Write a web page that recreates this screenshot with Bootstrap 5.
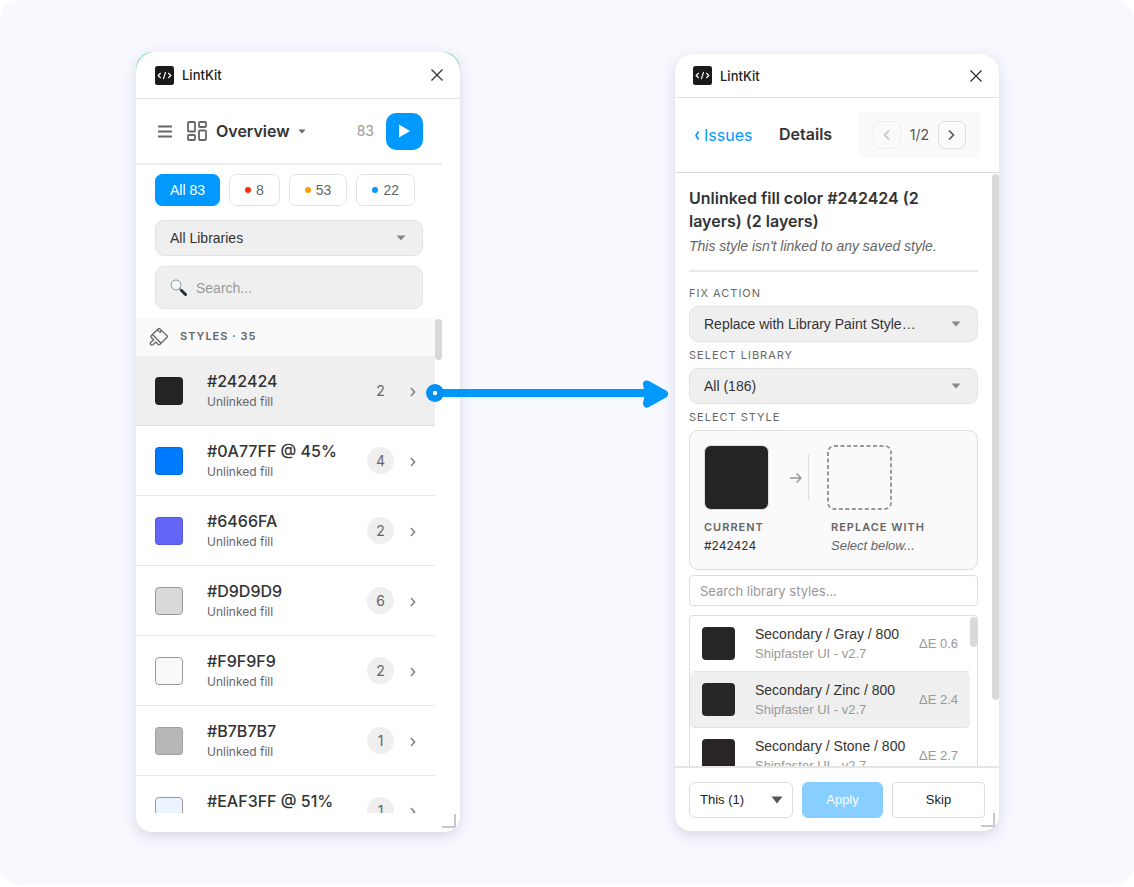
<!DOCTYPE html>
<html lang="en">
<head>
<meta charset="utf-8">
<meta name="viewport" content="width=device-width, initial-scale=1">
<title>LintKit</title>
<link rel="stylesheet" href="https://cdn.jsdelivr.net/npm/bootstrap@5.3.0/dist/css/bootstrap.min.css">
<style>
  :root { --accent: #0099ff; --line: #e2e2e2; --ink: #333; --soft: #efefef; --arial: "Liberation Sans", Arial, sans-serif; }
  body { font-family: Inter, "Liberation Sans", sans-serif; color: var(--ink); background: #fff; font-size: 14px; line-height: 20px; }
  .stage { background: #f8f9ff; border-radius: 20px; height: calc(100vh - 2px); min-height: 600px; padding: 52px 16px 53px 17px; }
  .panel-wrap { flex: 0 1 324px; min-width: 0; isolation: isolate; }
  .overview-wrap::before { content: ""; position: absolute; z-index: -1; inset: 0 0 auto; height: 40px; border-radius: 17px 17px 0 0; background: #6fdcc0; }
  .panel { height: 100%; background: #fff; border-radius: 19px 19px 16px 16px; overflow: hidden; box-shadow: 0 4px 14px rgba(40,40,80,.16); }
  .details-wrap { padding: 2px 0 1px; }
  .connector { flex: 0 1 215px; }
  .connector svg { position: absolute; left: -34px; top: 325px; width: calc(100% + 28px); z-index: 3; overflow: visible; }
  .titlebar { height: 47px; padding: 0 16px 0 19px; border-bottom: 1px solid var(--line); flex: none; font-size: 13px; font-weight: 500; color: #222; }
  .details-wrap .titlebar { height: 44px; padding-left: 18px; }
  .plain { background: none; border: 0; padding: 0; display: flex; align-items: center; color: inherit; }
  .toolbar { height: 66px; margin-right: 18px; padding: 0 19px 0 21px; border-bottom: 2px solid #ececec; flex: none; }
  .view-name { font-size: 16px; font-weight: 600; margin-left: 14px; }
  .total { color: #999; margin-right: 12px; }
  .play { width: 37px; height: 37px; border-radius: 10px; background: var(--accent); justify-content: center; }
  .filters { padding: 9px 37px 9px 19px; flex: none; }
  .chips { gap: 9px; margin-bottom: 14px; }
  .chip { height: 32px; border: 1px solid var(--line); border-radius: 7px; background: #fff; color: #666; font: 14px/20px var(--arial); padding: 0 15px; display: flex; align-items: center; gap: 5px; }
  .chip.on { background: var(--accent); border-color: var(--accent); color: #fff; padding: 0 14px; }
  .dot { width: 6px; height: 6px; border-radius: 50%; }
  .field, .field:focus { height: 36px; border: 1px solid var(--line); border-radius: 9px; background-color: var(--soft); color: var(--ink); font: 14px/20px var(--arial); padding: 0 14px; box-shadow: none; }
  select.field { background-image: url("data:image/svg+xml,%3Csvg xmlns='http://www.w3.org/2000/svg' viewBox='0 0 10 6'%3E%3Cpath d='M.5.5h9L5 5.5z' fill='%23888'/%3E%3C/svg%3E"); background-size: 10px 6px; background-position: right 16px center; padding-right: 30px; }
  .find { height: 43px; gap: 9px; margin-top: 10px; }
  .find input { border: 0; outline: 0; background: none; padding: 0; width: 100%; min-width: 0; font: 14px/20px var(--arial); }
  ::placeholder { color: #999 !important; opacity: 1; }
  .issues { min-height: 0; flex: 1; overflow: hidden; margin: 0 18px 19px 0; padding-right: 7px; }
  .thumb { position: absolute; right: 0; top: 1px; width: 7px; border-radius: 4px; background: #d9d9d9; }
  .group-head { height: 38px; padding: 0 13px; gap: 11px; background: #fafafa; font-size: 11px; font-weight: 600; letter-spacing: 1px; color: #666; margin: 0; }
  .issue { height: 70px; border: 0; border-bottom: 1px solid #e8e8e8; padding: 0 18px 0 19px; background: #fff; color: var(--ink); text-decoration: none; display: flex; align-items: center; }
  .issue.on { background: var(--soft); border-bottom-color: #dedede; }
  .swatch { width: 28px; height: 28px; border-radius: 4px; border: 1px solid rgba(0,0,0,.12); flex: none; margin-right: 24px; }
  .swatch.edge { border-color: #999; }
  .issue strong { display: block; font-size: 16px; line-height: 22px; font-weight: 500; }
  .issue em { display: block; font-style: normal; font-size: 12px; line-height: 20px; color: #666; }
  .count { min-width: 27px; height: 27px; border-radius: 14px; background: var(--soft); color: #666; font-size: 14px; line-height: 27px; text-align: center; margin-right: 15px; }
  .grip { position: absolute; right: 4px; bottom: 4px; width: 14px; height: 14px; border: solid #c8c8c8; border-width: 0 2px 2px 0; }
  .crumbs { height: 75px; padding: 0 19px; border-bottom: 1px solid #dcdcdc; flex: none; font-size: 16px; }
  .crumbs a { color: var(--accent); text-decoration: none; }
  .crumbs h1 { font-size: 16px; font-weight: 600; margin: 0; }
  .pager { background: #fafafa; height: 46px; padding: 0 14px; gap: 9px; font-size: 14px; color: #555; }
  .pager button { width: 28px; height: 28px; border: 1px solid #ddd; border-radius: 7px; background: none; justify-content: center; color: #555; }
  .pager button:disabled { border-color: #eee; color: #bbb; }
  .detail { flex: 1; min-height: 0; overflow: hidden; padding: 14px 21px 0 14px; }
  .detail h2 { font-size: 16px; line-height: 23px; font-weight: 600; margin: 0; padding-right: 16px; }
  .note { font: italic 14px/26px var(--arial); color: #666; margin: 0; padding-bottom: 11px; border-bottom: 2px solid #e8e8e8; }
  .cap { display: block; font-size: 11px; line-height: 26px; letter-spacing: 1px; color: #666; }
  .compare { height: 140px; border: 1px solid #ddd; border-radius: 9px; background: #fafafa; padding: 14px; margin-bottom: 5px; }
  .big { width: 65px; height: 65px; border-radius: 7px; margin-bottom: 8px; }
  .big.filled { border: 1px solid #ddd; }
  .compare b { display: block; font-size: 11px; line-height: 19px; font-weight: 600; letter-spacing: 1px; color: #666; }
  .compare .value { display: block; font-size: 12px; line-height: 18px; }
  .compare .unset { font: italic 13px/18px var(--arial); color: #666; }
  .side-a { width: 75px; }
  .side-b { margin-left: 18px; white-space: nowrap; }
  .side-b b, .side-b .value { margin-left: 4px; }
  .arrow { margin: 27px 0 0 11px; flex: none; }
  .split { height: 46px; width: 1px; background: #ddd; margin: 9px 0 0 6px; }
  .lib-find, .lib-find:focus { height: 31px; border: 1px solid #ddd; border-radius: 4px; font: 13px/20px Inter, sans-serif; padding: 0 10px; box-shadow: none; }
  .options { border: 1px solid #ddd; border-radius: 4px; margin-top: 9px; padding-right: 7px; overflow: hidden; }
  .option { width: 100%; height: 56px; border: 0; border-bottom: 1px solid #e2e2e2; border-radius: 5px; background: #fff; padding: 0 12px; display: flex; align-items: center; text-align: left; font: 14px/19px var(--arial); color: var(--ink); }
  .option.on { background: var(--soft); }
  .option i { width: 33px; height: 33px; border-radius: 4px; margin-right: 20px; flex: none; }
  .option small { display: block; font-size: 13px; color: #999; }
  .option .delta { font-size: 13px; color: #999; }
  .actions { height: 65px; padding: 0 14px; border-top: 2px solid #e6e6e6; flex: none; gap: 9px; }
  .actions .ctl { height: 36px; border: 1px solid #ddd; border-radius: 6px; background-color: #fff; color: #222; font: 13px/18px var(--arial); padding: 0 10px; }
  .actions select.ctl { flex: 0 0 104px; background-image: url("data:image/svg+xml,%3Csvg xmlns='http://www.w3.org/2000/svg' viewBox='0 0 12 8'%3E%3Cpath d='M.5.5h11L6 7.5z' fill='%23555'/%3E%3C/svg%3E"); background-size: 12px 8px; background-position: right 9px center; }
  .actions .apply { flex: 0 0 81px; background: #88ceff; border-color: #88ceff; color: #fff; }
  .actions .skip { flex: 1; border-radius: 4px; }
</style>
</head>
<body>
<svg class="d-none" aria-hidden="true">
  <symbol id="logo" viewBox="0 0 19 19"><rect width="19" height="19" rx="2.500" fill="#1a1a1a"/><path d="M5.700 7 3.200 9.500l2.500 2.500M13.300 7l2.500 2.500-2.500 2.500M10.600 5.800 8.400 13.200" fill="none" stroke="#fff" stroke-width="1.200"/></symbol>
  <symbol id="close" viewBox="0 0 14 14"><path d="M1.500 1.500l11 11M12.500 1.500l-11 11" stroke="#333" stroke-width="1.300"/></symbol>
  <symbol id="next" viewBox="0 0 8 12"><path d="M2 3 5.500 7 2 11" fill="none" stroke="#888" stroke-width="1.700"/></symbol>
</svg>
<main class="stage d-flex justify-content-center">
  <section class="panel-wrap overview-wrap position-relative">
    <div class="panel d-flex flex-column position-relative">
      <header class="titlebar d-flex align-items-center">
        <svg width="19" height="19" class="me-2"><use href="#logo"/></svg><span>LintKit</span>
        <button class="plain ms-auto" aria-label="Close"><svg width="14" height="14"><use href="#close"/></svg></button>
      </header>
      <div class="toolbar d-flex align-items-center">
        <button class="plain" aria-label="Menu"><svg width="16" height="14"><path d="M1 2.500h14M1 7.500h14M1 12.500h14" stroke="#666" stroke-width="2"/></svg></button>
        <button class="plain view-name"><svg width="21" height="20" viewBox="0 0 21 20" fill="none" stroke="#666" stroke-width="1.800" class="me-2"><rect x="1" y="1" width="7" height="9.500" rx="1"/><rect x="12" y="1" width="7" height="5" rx="1"/><rect x="1" y="14" width="7" height="5" rx="1"/><rect x="12" y="9.500" width="7" height="9.500" rx="1"/></svg>Overview<svg width="8" height="5" class="ms-2"><path d="M.5.5h7L4 4.500z" fill="#666"/></svg></button>
        <span class="ms-auto total">83</span>
        <button class="plain play" aria-label="Run"><svg width="13" height="14"><path d="M1 .5 12 7 1 13.500z" fill="#fff"/></svg></button>
      </div>
      <div class="filters">
        <div class="d-flex chips">
          <button class="chip on">All 83</button>
          <button class="chip"><span class="dot" style="background:#ff2d0a"></span>8</button>
          <button class="chip"><span class="dot" style="background:#ffa000"></span>53</button>
          <button class="chip"><span class="dot" style="background:#0099ff"></span>22</button>
        </div>
        <select class="form-select field" aria-label="Library"><option>All Libraries</option></select>
        <label class="field find d-flex align-items-center"><svg width="17" height="17" viewBox="0 0 17 17" class="flex-shrink-0"><circle cx="6" cy="6" r="5" fill="#f2f7f8" stroke="#8798a5"/><path d="M9.500 9.500l2 2" stroke="#777" stroke-width="1.500"/><path d="M11.500 11.500l4 4" stroke="#222e38" stroke-width="3" stroke-linecap="round"/></svg><input type="search" aria-label="Search" placeholder="Search..."></label>
      </div>
      <div class="issues position-relative">
        <span class="thumb" style="height:41px"></span>
        <h2 class="group-head d-flex align-items-center"><svg width="20" height="20" viewBox="0 0 20 20" fill="none" stroke="#666" stroke-width="1.300" stroke-linejoin="round"><path d="M3.500 7.500 9.300 1.700Q10 1 10.700 1.700L18 8.700Q18.700 9.500 18 10.200L12 16.200zM3.500 7.500 2.300 8.700Q1.500 9.600 2.300 10.500L4.600 12.800 1.700 15.500Q.8 16.500 1.700 17.500T4 17.700L6.800 15 9 17.200Q10 18 11 17.200L12 16.200M8.500 3l1.700 1.700M12.300 3.600 10.600 6"/></svg>STYLES · 35</h2>
        <a href="#" class="issue on"><span class="swatch" style="background:#242424"></span><span><strong>#242424</strong><em>Unlinked fill</em></span><span class="count ms-auto">2</span><svg width="8" height="12"><use href="#next"/></svg></a>
        <a href="#" class="issue"><span class="swatch" style="background:#007aff"></span><span><strong>#0A77FF @ 45%</strong><em>Unlinked fill</em></span><span class="count ms-auto">4</span><svg width="8" height="12"><use href="#next"/></svg></a>
        <a href="#" class="issue"><span class="swatch" style="background:#6466fa"></span><span><strong>#6466FA</strong><em>Unlinked fill</em></span><span class="count ms-auto">2</span><svg width="8" height="12"><use href="#next"/></svg></a>
        <a href="#" class="issue"><span class="swatch edge" style="background:#d9d9d9"></span><span><strong>#D9D9D9</strong><em>Unlinked fill</em></span><span class="count ms-auto">6</span><svg width="8" height="12"><use href="#next"/></svg></a>
        <a href="#" class="issue"><span class="swatch edge" style="background:#f9f9f9"></span><span><strong>#F9F9F9</strong><em>Unlinked fill</em></span><span class="count ms-auto">2</span><svg width="8" height="12"><use href="#next"/></svg></a>
        <a href="#" class="issue"><span class="swatch" style="background:#b7b7b7"></span><span><strong>#B7B7B7</strong><em>Unlinked fill</em></span><span class="count ms-auto">1</span><svg width="8" height="12"><use href="#next"/></svg></a>
        <a href="#" class="issue"><span class="swatch edge" style="background:#eaf3ff"></span><span><strong>#EAF3FF @ 51%</strong><em>Unlinked fill</em></span><span class="count ms-auto">1</span><svg width="8" height="12"><use href="#next"/></svg></a>
      </div>
      <span class="grip"></span>
    </div>
  </section>

  <div class="connector position-relative">
    <svg height="32" viewBox="0 0 243 32" preserveAspectRatio="none" aria-hidden="true"><path d="M9 16h218" stroke="#0099ff" stroke-width="8"/><path d="M221 7.500 238 17l-17 9.500 2-9.500z" fill="#0099ff" stroke="#0099ff" stroke-width="8" stroke-linejoin="round"/><circle cx="9" cy="16" r="9" fill="#0090f0"/><circle cx="9" cy="16" r="2.200" fill="#fff"/></svg>
  </div>

  <section class="panel-wrap details-wrap">
    <div class="panel d-flex flex-column position-relative">
      <header class="titlebar d-flex align-items-center">
        <svg width="19" height="19" class="me-2"><use href="#logo"/></svg><span>LintKit</span>
        <button class="plain ms-auto" aria-label="Close"><svg width="14" height="14"><use href="#close"/></svg></button>
      </header>
      <div class="crumbs d-flex align-items-center justify-content-between">
        <a href="#" class="d-flex align-items-center"><svg width="6" height="12" class="me-1"><path d="M4.500 2.500 2 6.500l2.500 4" fill="none" stroke="#0099ff" stroke-width="1.600"/></svg>Issues</a>
        <h1>Details</h1>
        <div class="pager d-flex align-items-center">
          <button class="plain" disabled aria-label="Previous"><svg width="9" height="12"><path d="M7 1.500 2.500 6 7 10.500" fill="none" stroke="currentColor" stroke-width="1.500"/></svg></button>
          <span>1/2</span>
          <button class="plain" aria-label="Next"><svg width="9" height="12"><path d="M2 1.500 6.500 6 2 10.500" fill="none" stroke="currentColor" stroke-width="1.600"/></svg></button>
        </div>
      </div>
      <div class="detail position-relative">
        <span class="thumb" style="height:526px"></span>
        <h2>Unlinked fill color #242424 (2 layers) (2 layers)</h2>
        <p class="note">This style isn't linked to any saved style.</p>
        <label class="cap pt-2" for="fix">FIX ACTION</label>
        <select id="fix" class="form-select field"><option>Replace with Library Paint Style…</option></select>
        <label class="cap" for="lib">SELECT LIBRARY</label>
        <select id="lib" class="form-select field"><option>All (186)</option></select>
        <span class="cap">SELECT STYLE</span>
        <div class="compare d-flex">
          <div class="side-a"><div class="big filled" style="background:#242424"></div><b>CURRENT</b><span class="value">#242424</span></div>
          <svg width="12" height="12" viewBox="0 0 12 12" class="arrow" fill="none" stroke="#999" stroke-width="1.500"><path d="M0 6h10.500M6.500 1.500 11 6l-4.500 4.500"/></svg>
          <div class="split"></div>
          <div class="side-b"><svg class="big d-block" viewBox="0 0 65 65"><rect x="1" y="1" width="63" height="63" rx="6" fill="none" stroke="#999" stroke-width="2" stroke-dasharray="4 2.500"/></svg><b>REPLACE WITH</b><span class="value unset">Select below...</span></div>
        </div>
        <input class="form-control lib-find" type="text" aria-label="Search library styles" placeholder="Search library styles...">
        <div class="options position-relative">
          <span class="thumb" style="height:30px"></span>
          <button class="option"><i style="background:#262626"></i><span>Secondary / Gray / 800<small>Shipfaster UI - v2.7</small></span><span class="delta ms-auto">ΔE 0.6</span></button>
          <button class="option on"><i style="background:#27272a"></i><span>Secondary / Zinc / 800<small>Shipfaster UI - v2.7</small></span><span class="delta ms-auto">ΔE 2.4</span></button>
          <button class="option"><i style="background:#292524"></i><span>Secondary / Stone / 800<small>Shipfaster UI - v2.7</small></span><span class="delta ms-auto">ΔE 2.7</span></button>
        </div>
      </div>
      <footer class="actions d-flex align-items-center">
        <select class="form-select ctl" aria-label="Scope"><option>This (1)</option></select>
        <button class="ctl apply">Apply</button>
        <button class="ctl skip">Skip</button>
      </footer>
      <span class="grip"></span>
    </div>
  </section>
</main>
<script src="https://cdn.jsdelivr.net/npm/bootstrap@5.3.0/dist/js/bootstrap.bundle.min.js"></script>
</body>
</html>
